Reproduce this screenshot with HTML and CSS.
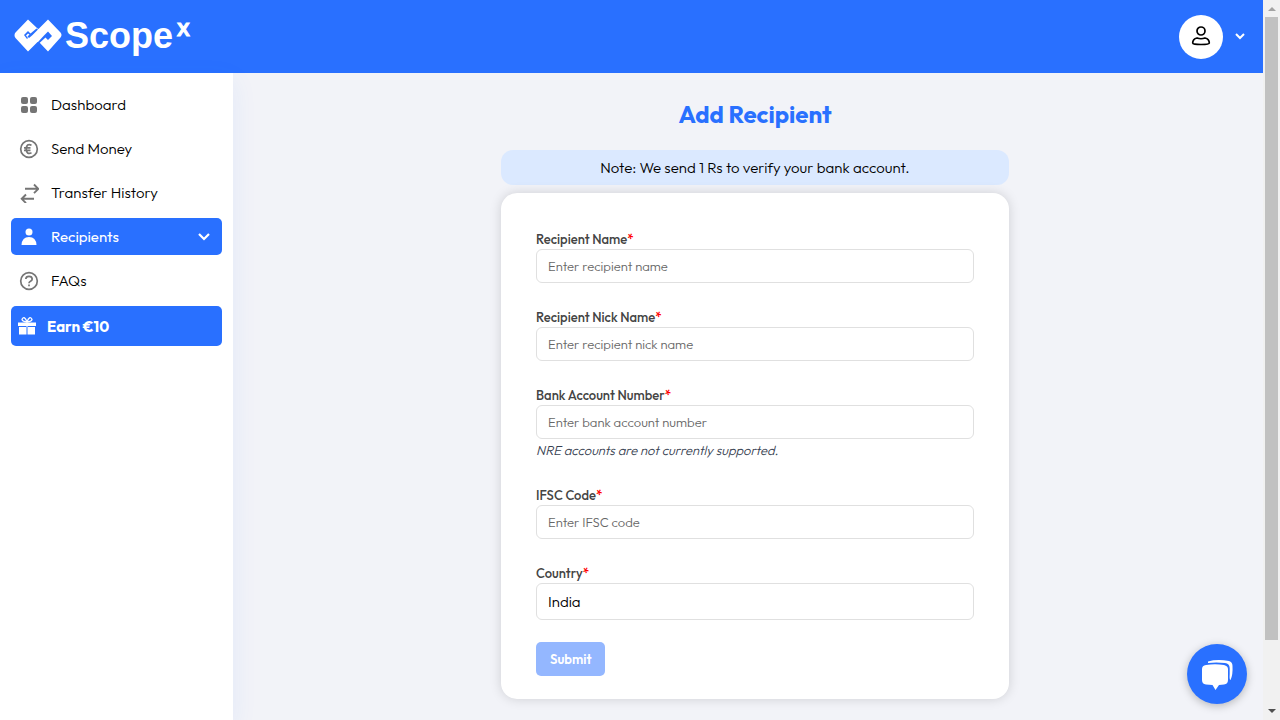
FILE: index.html
```html
<!DOCTYPE html>
<html lang="en">
<head>
<meta charset="utf-8">
<meta name="viewport" content="width=device-width, initial-scale=1">
<title>ScopeX - Add Recipient</title>
<link rel="stylesheet" href="styles.css">
</head>
<body>
<div class="app">
  <header class="topbar">
    <a class="logo" href="#" aria-label="ScopeX">
      <svg width="48" height="34" viewBox="0 0 48 34"><path fill="#fff" d="M14 .5L23.500 9.500L24.500 10L34 .5L46.500 13.500Q48.500 16 46.500 18.500L34 32.500L25 23L23.500 23L14 32.500L1.500 19Q-.500 16 1.500 13.500Z"/><path fill="#2970ff" d="M14 12L16.500 14.500L22.500 9.500L24 10.500L18 16.500L15 19L13.500 17.500L15.500 15.500L14 14.500L12 16.500L14 19L13 20L10 16ZM34 12.500L38 17L34 21L31.500 18.500L25.500 24L24 23L30 16.500Z"/></svg>
      <span class="logo-name">Scope</span><span class="logo-sup">X</span>
    </a>
    <button class="profile" aria-label="Account menu">
      <span class="avatar"><svg width="20" height="22" viewBox="0 0 20 22" fill="none" stroke="#000" stroke-width="1.700"><circle cx="10" cy="5" r="4"/><path d="M6 12Q10 13.500 14 12Q18.300 13 18.300 17Q18.300 18.500 10 18.500Q1.700 18.500 1.700 17Q1.700 13 6 12Z"/></svg></span>
      <svg width="10" height="8" viewBox="0 0 10 8" fill="none" stroke="#fff" stroke-width="2"><path d="M1 1l4 4 4-4"/></svg>
    </button>
  </header>
  <div class="body">
    <nav class="sidebar">
      <a class="item" href="#"><svg class="icon" viewBox="0 0 20 20" fill="#757575"><rect x="2" y="2" width="7" height="7" rx="2"/><rect x="11" y="2" width="7" height="7" rx="2"/><rect x="2" y="11" width="7" height="7" rx="2"/><rect x="11" y="11" width="7" height="7" rx="2"/></svg>Dashboard</a>
      <a class="item" href="#"><svg class="icon" viewBox="0 0 20 20" fill="none" stroke="#757575" stroke-width="1.700"><circle cx="10" cy="10" r="8.300"/><path d="M12.500 6.200Q7.500 4 7.200 10Q7.500 16 12.500 13.800M5 8.800H11.500M5 11.300H11.500"/></svg>Send Money</a>
      <a class="item" href="#"><svg class="icon" viewBox="0 0 20 20" fill="none" stroke="#757575" stroke-width="1.900"><path d="M6 5.800H19M15 1.500l4.300 4.300L15 10.100M15 15.800H3M7 11.500l-4.300 4.300L7 20.100"/></svg>Transfer History</a>
      <a class="item active" href="#"><svg class="icon" viewBox="0 0 20 20" fill="#fff"><circle cx="10" cy="5" r="3.500"/><path d="M2.500 18Q3 10 10 10T17.500 18Z"/></svg><span class="grow">Recipients</span><svg width="12" height="8" viewBox="0 0 12 8" fill="none" stroke="#fff" stroke-width="2.200"><path d="M1 1l5 5 5-5"/></svg></a>
      <a class="item" href="#"><svg class="icon" viewBox="0 0 20 20" fill="none" stroke="#757575" stroke-width="1.700"><circle cx="10" cy="10" r="8.300"/><path d="M6.800 8Q7 5.300 10 5.300T13.200 8Q13.200 9.300 11.500 10.300Q10 11 10 12.300M10 13.600V15.200"/></svg>FAQs</a>
      <a class="item earn" href="#"><svg class="icon" viewBox="0 0 20 20"><path d="M1 6.500H19V10H1ZM2 11H9V18.500H2ZM11 11H18V18.500H11ZM9 10H9.500V18.500H9ZM10.500 10H11V18.500H10.500Z" fill="#fff"/><path d="M10 6Q5 5.500 5 3.300Q7.500 -1 10 6Q12.500 -1 15 3.300Q15 5.500 10 6" fill="none" stroke="#fff" stroke-width="1.300"/></svg>Earn €10</a>
    </nav>
    <main class="main">
      <h1 class="title">Add Recipient</h1>
      <p class="notice">Note: We send 1 Rs to verify your bank account.</p>
      <form class="card">
        <div class="field"><label class="label" for="name">Recipient Name<span class="req">*</span></label><input class="input" id="name" placeholder="Enter recipient name"></div>
        <div class="field"><label class="label" for="nick">Recipient Nick Name<span class="req">*</span></label><input class="input" id="nick" placeholder="Enter recipient nick name"></div>
        <div class="field"><label class="label" for="account">Bank Account Number<span class="req">*</span></label><input class="input" id="account" placeholder="Enter bank account number"><p class="hint">NRE accounts are not currently supported.</p></div>
        <div class="field"><label class="label" for="ifsc">IFSC Code<span class="req">*</span></label><input class="input" id="ifsc" placeholder="Enter IFSC code"></div>
        <div class="field last"><label class="label" for="country">Country<span class="req">*</span></label><input class="input country" id="country" value="India" readonly></div>
        <button class="submit" type="submit" disabled>Submit</button>
      </form>
    </main>
  </div>
  <button class="chat" aria-label="Open chat"><svg width="34" height="34" viewBox="0 0 34 34" fill="#fff"><path d="M6 8Q15 6.500 24 8Q28 9 28 12V23Q28 27 24 27.500L19 28L15.500 33L12.500 28L6 27.500Q2 27 2 23V12Q2 8.500 6 8Z"/><path d="M8 4.500Q17 2 29 4Q32.500 5 32.500 9Q33 18 30.500 23Q29.300 23 29.700 17V11Q29.500 6.500 25 6Q16 5 8 6Z"/></svg></button>
</div>
<div class="scrollbar" aria-hidden="true"><span class="arrow up"></span><span class="thumb"></span><span class="arrow down"></span></div>
</body>
</html>
```
FILE: styles.css
```css
* { box-sizing: border-box; }
body { margin: 0; display: flex; min-height: 100vh; background: #f2f3f8; color: #000; font-family: Outfit, Lato, sans-serif; font-size: 15px; font-weight: 300; }
h1, p { margin: 0; }
a { color: inherit; text-decoration: none; }
button, input { font-family: inherit; font-weight: inherit; }
button { border: 0; padding: 0; }
.app { flex: 1; display: flex; flex-direction: column; }
.topbar { height: 73px; display: flex; align-items: center; justify-content: space-between; padding: 0 18px 0 14px; background: #2970ff; }
.logo { display: flex; align-items: center; padding-bottom: 2px; color: #fff; font-family: "Liberation Sans", Arial, sans-serif; font-weight: bold; }
.logo-name { margin-left: 3px; font-size: 36px; line-height: 40px; }
.logo-sup { align-self: flex-start; margin-left: 4px; font-size: 19px; line-height: 28px; -webkit-text-stroke: 1px #fff; }
.profile { display: flex; align-items: center; gap: 12px; background: none; }
.avatar { width: 44px; height: 44px; display: grid; place-items: center; border-radius: 50%; background: #fff; }
.body { flex: 1; display: flex; }
.sidebar { width: 233px; display: flex; flex-direction: column; gap: 7px; padding: 13px 11px; background: #fff; box-shadow: 0 8px 24px #2970ff14; }
.item { height: 37px; display: flex; align-items: center; gap: 12px; padding: 0 12px 0 8px; border-radius: 5px; }
.icon { width: 20px; height: 20px; flex: none; }
.grow { flex: 1; }
.active { background: #2970ff; color: #fff; font-weight: 400; }
.earn { height: 40px; gap: 10px; padding-left: 6px; background: #2970ff; color: #fff; font-weight: 700; }
.main { flex: 1; display: flex; flex-direction: column; align-items: center; padding: 25px 0 20px 14px; }
.title { color: #2970ff; font-size: 24px; line-height: 32px; font-weight: 700; }
.notice { width: 100%; max-width: 508px; margin: 20px 0 8px; border-radius: 12px; background: #dbe9ff; line-height: 35px; text-align: center; }
.card { width: 100%; max-width: 508px; display: flex; flex-direction: column; gap: 24px; padding: 36px 35px 23px; border-radius: 16px; background: #fff; box-shadow: 0 0 12px #00000026; }
.field { display: flex; flex-direction: column; }
.last { margin-bottom: -2px; }
.label { color: #444; font-size: 13px; line-height: 20px; font-weight: 500; }
.req { color: #f00; }
.input { height: 34px; padding: 0 11px; border: 1px solid #e0e0e0; border-radius: 6px; background: #fff; color: #000; font-size: 13px; }
.input::placeholder { color: #666; }
.country { height: 37px; font-size: 15px; }
.hint { color: #374151; font-size: 13px; line-height: 22px; font-style: italic; }
.submit { align-self: flex-start; height: 34px; padding: 0 14px; border-radius: 5px; background: #94b7ff; color: #fff; font-size: 13px; font-weight: 600; }
.chat { position: fixed; right: 33px; bottom: 16px; width: 60px; height: 60px; display: grid; place-items: center; border-radius: 50%; background: #2970ff; box-shadow: 0 2px 8px #00000040; }
.scrollbar { width: 17px; height: 100vh; position: sticky; top: 0; display: flex; flex-direction: column; align-items: center; padding: 7px 0; background: #f1f1f1; }
.arrow { border: 4px solid transparent; }
.up { border-top: 0; border-bottom-color: #a3a3a3; }
.down { border-bottom: 0; border-top-color: #505050; margin-top: auto; }
.thumb { width: 13px; height: calc(100vh - 97px); margin-top: 6px; background: #c1c1c1; }
```
